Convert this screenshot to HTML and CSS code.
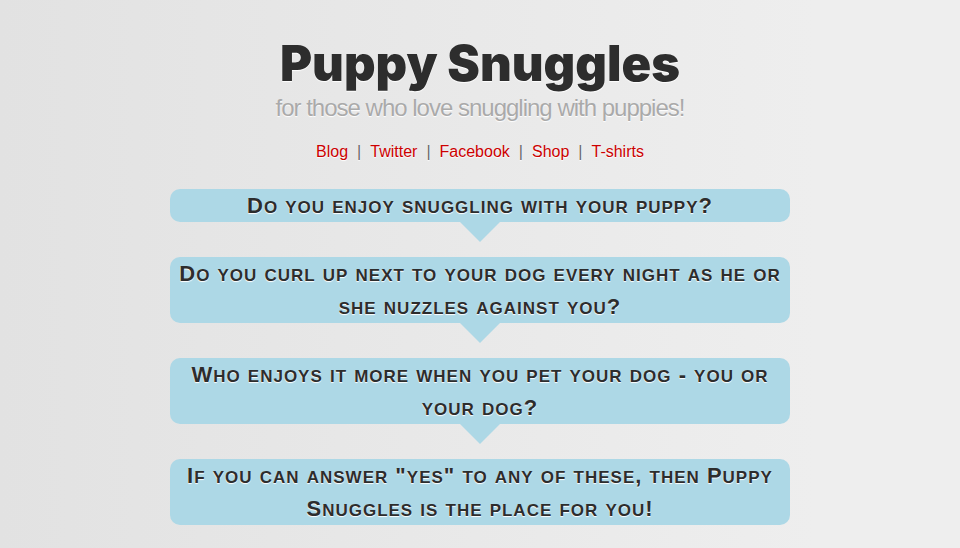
FILE: index.html
```html
<!DOCTYPE html>
<html lang="en">
<head>
<meta charset="utf-8">
<meta name="viewport" content="width=device-width, initial-scale=1">
<title>Puppy Snuggles</title>
<link rel="stylesheet" href="styles.css">
</head>
<body>
<div class="wrapper">
<header class="masthead">
<h1>Puppy Snuggles</h1>
<p class="tagline">for those who love snuggling with puppies!</p>
<nav class="links">
<a href="#blog">Blog</a><span>|</span><a href="#twitter">Twitter</a><span>|</span><a href="#facebook">Facebook</a><span>|</span><a href="#shop">Shop</a><span>|</span><a href="#shirts">T-shirts</a>
</nav>
</header>
<main class="questions">
<h2 class="bubble bubble-arrow">D<span>o</span> <span>you</span> <span>enjoy</span> <span>snuggling</span> <span>with</span> <span>your</span> <span>puppy</span>?</h2>
<h2 class="bubble bubble-arrow">D<span>o</span> <span>you</span> <span>curl</span> <span>up</span> <span>next</span> <span>to</span> <span>your</span> <span>dog</span> <span>every</span> <span>night</span> <span>as</span> <span>he</span> <span>or</span> <span>she</span> <span>nuzzles</span> <span>against</span> <span>you</span>?</h2>
<h2 class="bubble bubble-arrow">W<span>ho</span> <span>enjoys</span> <span>it</span> <span>more</span> <span>when</span> <span>you</span> <span>pet</span> <span>your</span> <span>dog</span> - <span>you</span> <span>or</span> <span>your</span> <span>dog</span>?</h2>
<h2 class="bubble">I<span>f</span> <span>you</span> <span>can</span> <span>answer</span> "<span>yes</span>" <span>to</span> <span>any</span> <span>of</span> <span>these</span>, <span>then</span> P<span>uppy</span> S<span>nuggles</span> <span>is</span> <span>the</span> <span>place</span> <span>for</span> <span>you</span>!</h2>
</main>
</div>
</body>
</html>
```
FILE: styles.css
```css
* { box-sizing: border-box; }
html { min-height: 100%; background: linear-gradient(to right, #e2e2e2, #eee 85%); }
body {
  margin: 0;
  color: #2d2d2d;
  font-family: "Liberation Sans", Arial, sans-serif;
  font-size: 16px;
  text-align: center;
  text-shadow: 0 1px 1px #fff;
}
.wrapper { max-width: 620px; margin: 0 auto; padding: 36px 0 23px; }
h1, h2, p { margin: 0; }
h1 { font-family: "Arial Black", Inter, sans-serif; font-weight: 900; font-size: 49px; line-height: 56px; }
.tagline { color: #aaa; font-size: 24px; line-height: 32px; letter-spacing: -1px; }
.links { display: flex; justify-content: center; gap: 9px; margin-top: 16px; line-height: 24px; color: #666; }
.links a { color: #c00; text-decoration: none; }
.questions { display: grid; gap: 35px; margin-top: 25px; }
.bubble {
  position: relative;
  border-radius: 10px;
  background: lightblue;
  font-size: 22px;
  line-height: 33px;
  letter-spacing: 1px;
}
/* Lowercase letters drawn as slightly smaller capitals. */
.bubble span { font-size: 17px; line-height: 17px; text-transform: uppercase; }
.bubble-arrow::after {
  content: "";
  position: absolute;
  top: 100%;
  left: 50%;
  margin-left: -20px;
  border: 20px solid transparent;
  border-top-color: lightblue;
  border-bottom-width: 0;
}
```
